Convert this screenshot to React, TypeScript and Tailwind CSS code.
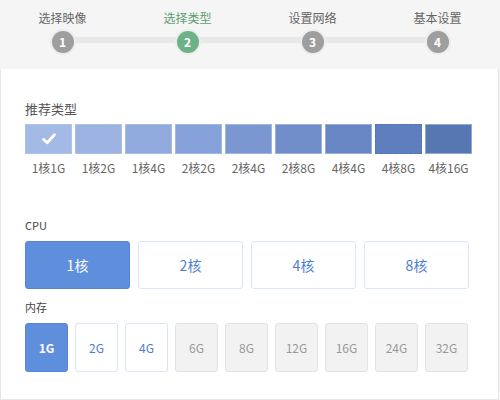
import React from "react";

const steps = [
  { n: 1, label: "选择映像" },
  { n: 2, label: "选择类型", active: true },
  { n: 3, label: "设置网络" },
  { n: 4, label: "基本设置" },
];

const types = [
  { label: "1核1G", bg: "bg-[#a4bae6]" },
  { label: "1核2G", bg: "bg-[#9cb3e2]" },
  { label: "1核4G", bg: "bg-[#91aade]" },
  { label: "2核2G", bg: "bg-[#86a1d9]" },
  { label: "2核4G", bg: "bg-[#7b97d2]" },
  { label: "2核8G", bg: "bg-[#718ecb]" },
  { label: "4核4G", bg: "bg-[#6886c4]" },
  { label: "4核8G", bg: "bg-[#5f7ebd]" },
  { label: "4核16G", bg: "bg-[#5777b2]" },
];

const cpus = ["1核", "2核", "4核", "8核"];
const mems = ["1G", "2G", "4G", "6G", "8G", "12G", "16G", "24G", "32G"];

const App = () => {
  return (
    <div className="w-[500px] h-[400px] bg-[#f5f5f5] font-['Noto_Sans_CJK_SC','Noto_Sans',sans-serif] overflow-hidden">
      {/* steps */}
      <div className="relative h-[69px] grid grid-cols-4 pt-[9px]">
        <div className="absolute left-[63px] right-[63px] top-[37px] h-[6px] bg-[#e8e8e8]" />
        {steps.map((s) => (
          <div key={s.n} className="relative flex flex-col items-center">
            <div className={`text-[12px] leading-[18px] ${s.active ? "text-[#5c9e70]" : "text-[#666]"}`}>{s.label}</div>
            <div className="mt-[2px] w-[26px] h-[26px] rounded-full bg-[#ececec] flex items-center justify-center">
              <div
                className={`w-[22px] h-[22px] rounded-full flex items-center justify-center text-white text-[12px] font-semibold ${
                  s.active ? "bg-[#6db287]" : "bg-[#9e9e9e]"
                }`}
              >
                {s.n}
              </div>
            </div>
          </div>
        ))}
      </div>

      {/* panel */}
      <div className="w-[499px] h-[331px] bg-white border-l border-r border-b border-[#e6e6e6] pt-[31px] px-[24px]">
        <div className="text-[13px] leading-[18px] text-[#555]">推荐类型</div>
        <div className="mt-[6px] flex gap-[3px]">
          {types.map((t, i) => (
            <div key={t.label} className="w-[47px] flex flex-col items-center">
              <div
                className={`w-[47px] h-[30px] ${t.bg} border ${
                  i === 7 ? "border-dashed border-[#4a72c8]/80" : "border-[#b8c9ec]/60"
                } flex items-center justify-center`}
              >
                {i === 0 && (
                  <svg width="14" height="12" viewBox="0 0 14 12">
                    <path d="M1.6 6.4 L5.2 9.8 L12.4 1.8" fill="none" stroke="white" strokeWidth="2.8" strokeLinecap="round" strokeLinejoin="round" />
                  </svg>
                )}
              </div>
              <div className="mt-[6px] text-[12px] leading-[16px] text-[#666] whitespace-nowrap">{t.label}</div>
            </div>
          ))}
        </div>

        <div className="mt-[41px] text-[11px] leading-[16px] text-[#444]">CPU</div>
        <div className="mt-[8px] flex gap-[8px]">
          {cpus.map((c, i) => (
            <div
              key={c}
              className={`w-[105px] h-[48px] rounded-[3px] border flex items-center justify-center text-[14px] ${
                i === 0 ? "bg-[#5f8edc] border-[#5585d6] text-white" : "bg-white border-[#dbe5f7] text-[#4d7dd1]"
              }`}
            >
              {c}
            </div>
          ))}
        </div>

        <div className="mt-[10px] text-[11px] leading-[16px] text-[#444]">内存</div>
        <div className="mt-[8px] flex gap-[7px]">
          {mems.map((m, i) => (
            <div
              key={m}
              className={`w-[43px] h-[49px] rounded-[3px] border flex items-center justify-center text-[12px] ${
                i === 0
                  ? "bg-[#5f8edc] border-[#5585d6] text-white font-bold"
                  : i < 3
                  ? "bg-white border-[#dbe5f7] text-[#4d7dd1]"
                  : "bg-[#f2f2f2] border-[#e3e3e3] text-[#999]"
              }`}
            >
              {m}
            </div>
          ))}
        </div>
      </div>
    </div>
  );
};

export default App;
